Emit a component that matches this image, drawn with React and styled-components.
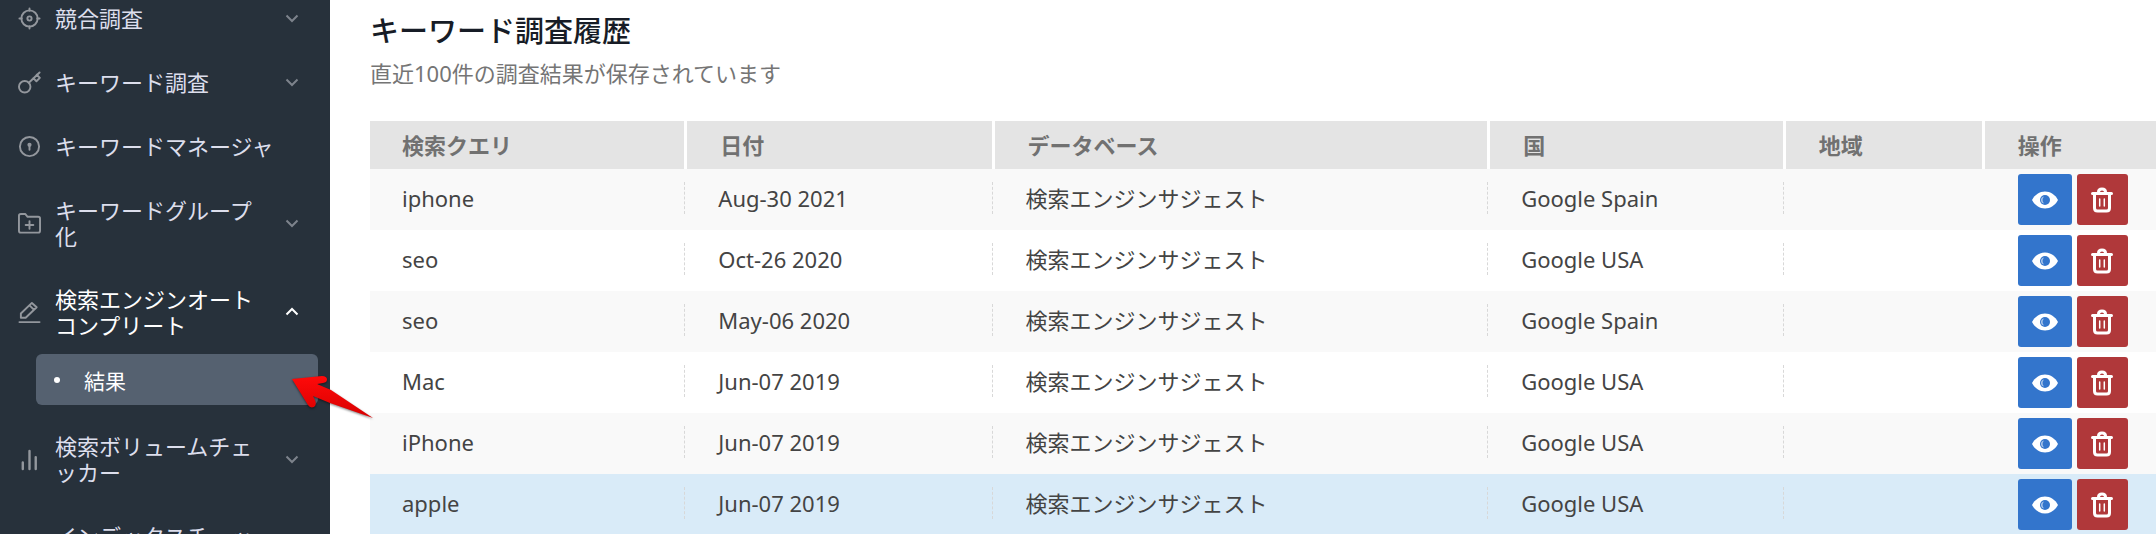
import styled, { createGlobalStyle } from "styled-components";

const GlobalStyle = createGlobalStyle`
  * {
    box-sizing: border-box;
  }
  body {
    margin: 0;
    background: #fff;
    font-family: "Noto Sans", "Noto Sans CJK JP", sans-serif;
    font-size: 22px;
    overflow: hidden;
  }
`;

const menu = [
  { label: "競合調査", icon: "target", arrow: "down" },
  { label: "キーワード調査", icon: "key", arrow: "down" },
  { label: "キーワードマネージャ", icon: "keyhole" },
  { label: "キーワードグループ化", icon: "folder", arrow: "down" },
  { label: "検索エンジンオートコンプリート", icon: "pencil", arrow: "up", children: ["結果"] },
  { label: "検索ボリュームチェッカー", icon: "bars", arrow: "down" },
  { label: "インデックスチェッカー", icon: "search", arrow: "down" },
];

const columns = [
  { title: "検索クエリ", width: "17.6%" },
  { title: "日付", width: "17.2%" },
  { title: "データベース", width: "27.75%" },
  { title: "国", width: "16.55%" },
  { title: "地域", width: "11.15%" },
  { title: "操作", width: "auto" },
];

const history = [
  { query: "iphone", date: "Aug-30 2021", country: "Google Spain" },
  { query: "seo", date: "Oct-26 2020", country: "Google USA" },
  { query: "seo", date: "May-06 2020", country: "Google Spain" },
  { query: "Mac", date: "Jun-07 2019", country: "Google USA" },
  { query: "iPhone", date: "Jun-07 2019", country: "Google USA" },
  { query: "apple", date: "Jun-07 2019", country: "Google USA", active: true },
];

const MenuIcon = ({ name }) => (
  <IconBox viewBox="0 0 24 24" aria-hidden="true">
    {name === "target" && (
      <>
        <circle cx="12" cy="12" r="8.500" />
        <circle cx="12" cy="12" r="2.200" />
        <path d="M12 1.500V4M12 20v2.500M1.500 12H4M20 12h2.500" />
      </>
    )}
    {name === "key" && (
      <>
        <circle cx="7" cy="16.500" r="6" />
        <path d="M11.300 12.200 22.500 1.500M16 7.500l3.200 3.200 3.600-3.600-3.200-3.200" />
      </>
    )}
    {name === "keyhole" && (
      <>
        <circle cx="12" cy="12" r="10" />
        <circle cx="12" cy="10.300" r="1.200" />
        <path d="M12 11v4.500" />
      </>
    )}
    {name === "folder" && (
      <>
        <path d="M1 19.500V4Q1 2 3 2h4.500l2.500 3H21q2 0 2 2v12.500q0 2-2 2H3q-2 0-2-2Z" />
        <path d="M12 9.500v8M8 13.500h8" />
      </>
    )}
    {name === "pencil" && (
      <path d="M3 17.500v-4.500L14.500 2l5 4.500L8 17.500ZM12 4.500l4.500 4.500M1.500 22h21" />
    )}
    {name === "bars" && <path strokeWidth="2.500" d="M5 22v-7M12 22V3M18.500 22V9.500" />}
    {name === "search" && (
      <>
        <circle cx="10" cy="10" r="8" />
        <path d="m16 16 6 6" />
      </>
    )}
  </IconBox>
);

const Chevron = ({ dir }) => (
  <ChevronBox viewBox="0 0 14 14" data-dir={dir} aria-hidden="true">
    <path d={dir === "up" ? "M1.500 9.500 7 4l5.500 5.500" : "M1.500 4.500 7 10l5.500-5.500"} />
  </ChevronBox>
);

const EyeIcon = () => (
  <svg width="26" height="18" viewBox="0 0 26 18" aria-hidden="true">
    <path fill="#fff" d="M0 9C3 3.500 7.500.500 13 .500S23 3.500 26 9c-3 5.500-7.500 8.500-13 8.500S3 14.500 0 9Z" />
    <circle cx="13" cy="9" r="5" fill="#3375cc" />
    <path fill="#fff" opacity=".6" d="M12 5.500q-3 3.500 0 7-3-.500-3-3.500t3-3.500Z" />
  </svg>
);

const TrashIcon = () => (
  <svg width="22" height="26" viewBox="0 0 22 26" fill="none" stroke="#fff" strokeLinecap="round" aria-hidden="true">
    <path strokeWidth="3" d="M1.500 6.500h19M3.500 7v14q0 3 3 3h9q3 0 3-3V7M7.500 6V5q0-3 3.500-3t3.500 3v1" />
    <path strokeWidth="1.500" d="M8.700 12v7M13.300 12v7" />
  </svg>
);

const App = () => {
  return (
    <Page>
      <GlobalStyle />
      <Sidebar>
        <Menu>
          {menu.map((item) => (
            <li key={item.label}>
              <MenuButton type="button" $open={!!item.children}>
                <MenuIcon name={item.icon} />
                <MenuLabel>{item.label}</MenuLabel>
                {item.arrow && <Chevron dir={item.arrow} />}
              </MenuButton>
              {item.children && (
                <SubMenu>
                  {item.children.map((child) => (
                    <li key={child}>
                      <SubLink href="#">{child}</SubLink>
                    </li>
                  ))}
                  <Pointer viewBox="0 0 84 48" aria-hidden="true">
                    <defs>
                      <linearGradient id="red" x1="0" y1="0" x2="0" y2="1">
                        <stop offset="0" stopColor="#ff0a0a" />
                        <stop offset="1" stopColor="#d80000" />
                      </linearGradient>
                    </defs>
                    <path
                      fill="url(#red)"
                      d="M1 4 31 1q5 0 5 3.500 0 3-4 3.500l-6 1 14 6 42 28-43-15-17-7 2 4q2 5-1 7-4 1.500-6-2Z"
                    />
                  </Pointer>
                </SubMenu>
              )}
            </li>
          ))}
        </Menu>
      </Sidebar>
      <Main>
        <h1>キーワード調査履歴</h1>
        <p>直近100件の調査結果が保存されています</p>
        <Table>
          <colgroup>
            {columns.map((col) => (
              <Col key={col.title} $width={col.width} />
            ))}
          </colgroup>
          <thead>
            <tr>
              {columns.map((col) => (
                <th key={col.title}>{col.title}</th>
              ))}
            </tr>
          </thead>
          <tbody>
            {history.map((row, i) => (
              <Row key={i} $active={row.active}>
                <td><Cell $first>{row.query}</Cell></td>
                <td><Cell>{row.date}</Cell></td>
                <td><Cell>検索エンジンサジェスト</Cell></td>
                <td><Cell>{row.country}</Cell></td>
                <td><Cell /></td>
                <td>
                  <Actions>
                    <ViewButton type="button" aria-label="表示"><EyeIcon /></ViewButton>
                    <DeleteButton type="button" aria-label="削除"><TrashIcon /></DeleteButton>
                  </Actions>
                </td>
              </Row>
            ))}
          </tbody>
        </Table>
      </Main>
    </Page>
  );
};

export default App;

const Page = styled.div`
  display: flex;
  height: 100vh;
  overflow: hidden;
`;

const Sidebar = styled.nav`
  flex: 0 0 330px;
  background: #27313b;
`;

// the menu is scrolled a little, its first entry is cut at the top
const Menu = styled.ul`
  list-style: none;
  margin: -14px 0 0;
  padding: 0;
`;

const MenuButton = styled.button`
  display: flex;
  align-items: center;
  width: 100%;
  padding: ${({ $open }) => ($open ? "18px 31px 16px 18px" : "19px 31px 19px 18px")};
  border: 0;
  background: none;
  color: ${({ $open }) => ($open ? "#fff" : "#dcdeec")};
  font: inherit;
  line-height: 26px;
  text-align: left;
  cursor: pointer;
`;

const IconBox = styled.svg`
  flex: none;
  width: 23px;
  height: 23px;
  margin-right: 14px;
  fill: none;
  stroke: #93979d;
  stroke-width: 2;
  stroke-linecap: round;
  stroke-linejoin: round;
`;

const MenuLabel = styled.span`
  flex: 1;
  word-break: break-all;
`;

const ChevronBox = styled.svg`
  flex: none;
  width: 14px;
  height: 14px;
  margin-left: 24px;
  fill: none;
  stroke: ${({ 'data-dir': dir }) => (dir === "up" ? "#fff" : "#7d838c")};
  stroke-width: 2;
`;

const SubMenu = styled.ul`
  position: relative;
  list-style: none;
  margin: 0 12px 9px 36px;
  padding: 0;
`;

const SubLink = styled.a`
  display: flex;
  align-items: center;
  gap: 24px;
  height: 51px;
  padding-left: 18px;
  border-radius: 6px;
  background: #556170;
  color: #fff;
  font-size: 21px;
  text-decoration: none;

  &::before {
    content: "";
    width: 6px;
    height: 6px;
    border-radius: 50%;
    background: #fff;
  }
`;

const Pointer = styled.svg`
  position: absolute;
  top: 21px;
  left: 255px;
  width: 84px;
  height: 48px;
  z-index: 1;
  filter: drop-shadow(0 1px 1px rgba(0, 0, 0, 0.5));
`;

const Main = styled.main`
  flex: 1;
  min-width: 0;
  padding: 10px 0 0 40px;

  h1 {
    margin: 0;
    color: #171c26;
    font-size: 29px;
    font-weight: 500;
    line-height: 42px;
  }
  p {
    margin: 5px 0 32px;
    color: #757575;
    line-height: 32px;
  }
`;

const Table = styled.table`
  width: 100%;
  table-layout: fixed;
  border-collapse: separate;
  border-spacing: 0;

  th {
    height: 48px;
    padding: 0 0 0 33px;
    border-left: 3px solid #fff;
    background: #e4e4e4;
    color: #717171;
    font-weight: 600;
    line-height: 32px;
    text-align: left;
  }
  th:first-child {
    padding-left: 32px;
    border-left: 0;
  }
  td {
    height: 61px;
    padding: 0 0 3px;
    color: #444;
  }
  td:last-child {
    padding: 0;
  }
`;

const Col = styled.col`
  width: ${({ $width }) => $width};
`;

const Row = styled.tr`
  background: ${({ $active }) => ($active ? "#d9ebf8" : "#fff")};

  &:nth-child(odd) {
    background: #f9f9f9;
  }
`;

const Cell = styled.div`
  height: 32px;
  padding-left: ${({ $first }) => ($first ? "32px" : "33px")};
  border-left: ${({ $first }) => ($first ? "0" : "1px dashed #d8d8d8")};
  line-height: 32px;
  white-space: nowrap;
`;

const Actions = styled.div`
  display: flex;
  gap: 5px;
  padding-left: 36px;
`;

const ActionButton = styled.button`
  display: flex;
  align-items: center;
  justify-content: center;
  height: 51px;
  padding: 0;
  border: 0;
  border-radius: 3px;
  cursor: pointer;
`;

const ViewButton = styled(ActionButton)`
  width: 54px;
  background: #3375cc;
`;

const DeleteButton = styled(ActionButton)`
  width: 51px;
  background: #b0383a;
`;
